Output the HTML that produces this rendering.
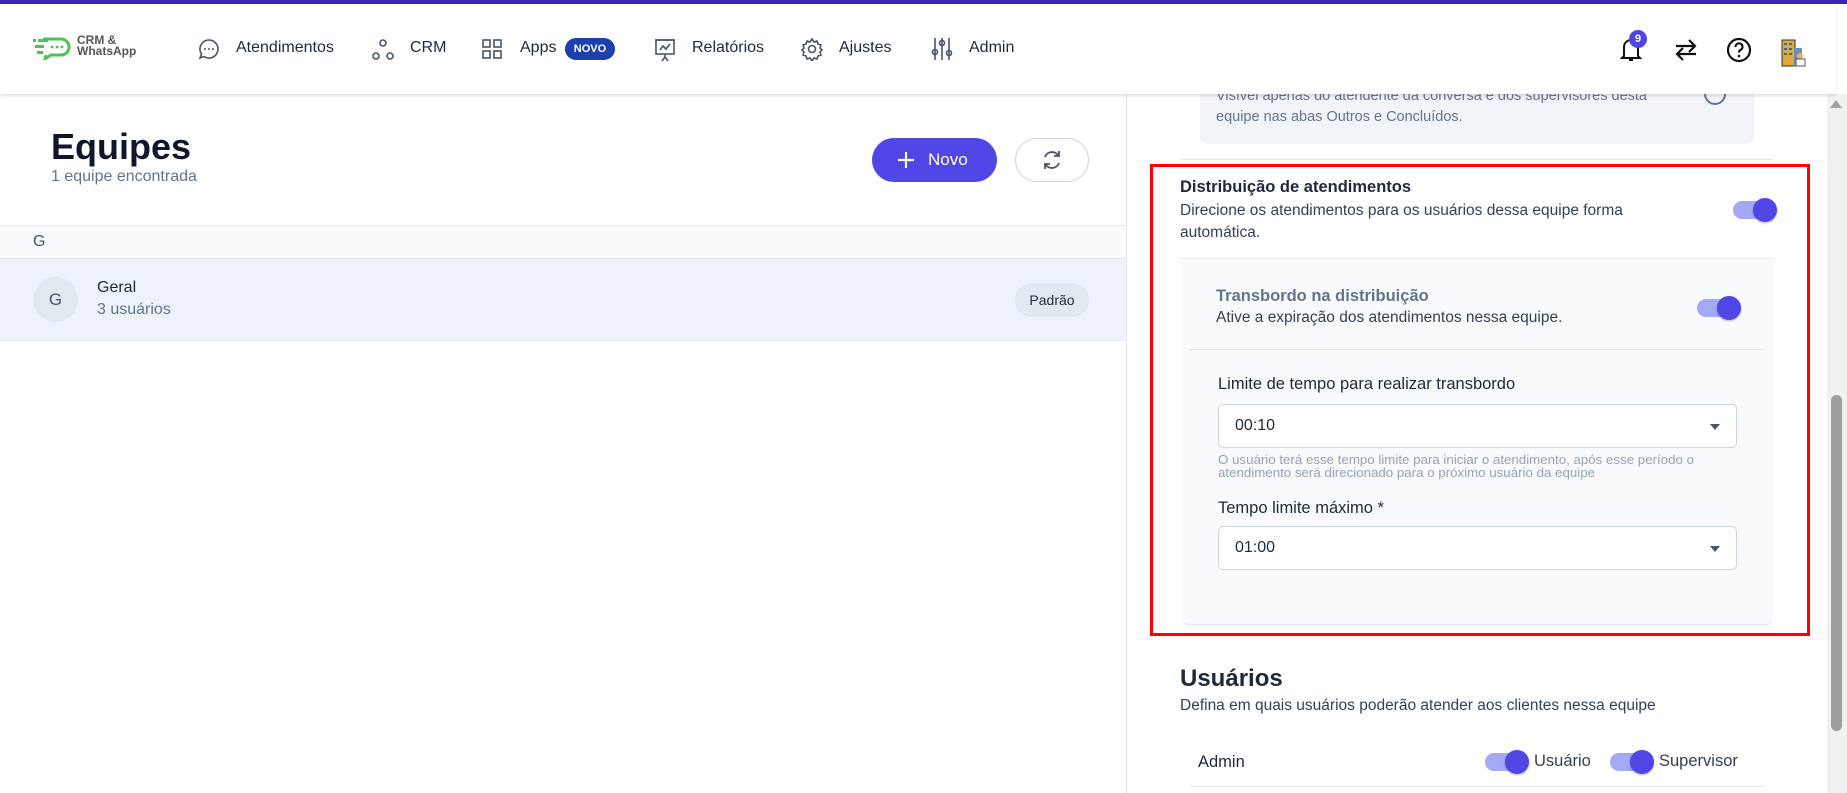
<!DOCTYPE html>
<html><head><meta charset="utf-8"><style>
*{box-sizing:border-box;margin:0;padding:0}
body{width:1847px;height:793px;overflow:hidden;background:#fff;font-family:"Liberation Sans",sans-serif;color:#1e293b;position:relative}
.a{position:absolute;white-space:nowrap}
.topline{left:0;top:0;width:1847px;height:4px;background:#3b24b8;z-index:5}
.header{left:0;top:4px;width:1836px;height:90px;background:#fff;box-shadow:0 2px 3px rgba(0,0,0,.12);z-index:4}
.nav{font-size:16px;color:#1e293b}
.ic{stroke:#475569;fill:none;stroke-width:1.6}
.tog{position:absolute;width:42px;height:18px;border-radius:9px;background:#a5a8f5}
.tog::after{content:"";position:absolute;right:-2px;top:-3px;width:24px;height:24px;border-radius:50%;background:#4f46e5;box-shadow:0 1px 2px rgba(0,0,0,.3)}
.sel{position:absolute;left:1218px;width:519px;height:44px;border:1px solid #cbd5e1;border-radius:5px;background:#fff;font-size:16px;color:#1e293b;padding:12px 0 0 16px}
.sel::after{content:"";position:absolute;right:16px;top:19px;border-left:5px solid transparent;border-right:5px solid transparent;border-top:6px solid #475569}
</style></head><body>
<div class="a topline"></div>
<div class="a header">
  <svg class="a" style="left:33px;top:32px" width="40" height="24" viewBox="0 0 40 24"><g fill="#4cc352"><rect x="0" y="3" width="3" height="3"/><rect x="5" y="3" width="10" height="3"/><rect x="2" y="9" width="9" height="3"/><rect x="4" y="15" width="6" height="3"/></g><path d="M10 3h18a8 8 0 0 1 0 16H18l-6 4 1-4" fill="none" stroke="#4cc352" stroke-width="3"/><circle cx="19" cy="11" r="1.4" fill="#4cc352"/><circle cx="24" cy="11" r="1.4" fill="#4cc352"/><circle cx="29" cy="11" r="1.4" fill="#4cc352"/></svg>
  <div class="a" style="left:77px;top:31px;font-size:12px;line-height:11px;font-weight:bold;color:#555">CRM &amp;<br>WhatsApp</div>
  <svg class="a" style="left:197px;top:33px" width="24" height="24" viewBox="0 0 24 24"><path class="ic" d="M12 3a9 9 0 1 1-5 16.5L3 21l1.5-4A9 9 0 0 1 12 3z"/><circle cx="8" cy="12" r="1" fill="#475569"/><circle cx="12" cy="12" r="1" fill="#475569"/><circle cx="16" cy="12" r="1" fill="#475569"/></svg>
  <div class="a nav" style="left:236px;top:35px">Atendimentos</div>
  <svg class="a" style="left:370px;top:33px" width="26" height="26" viewBox="0 0 26 26"><circle class="ic" cx="13" cy="6" r="3"/><circle class="ic" cx="6" cy="19" r="3"/><circle class="ic" cx="20" cy="19" r="3"/></svg>
  <div class="a nav" style="left:410px;top:35px">CRM</div>
  <svg class="a" style="left:481px;top:34px" width="22" height="22" viewBox="0 0 22 22"><rect class="ic" x="2" y="2" width="7" height="7"/><rect class="ic" x="13" y="2" width="7" height="7"/><rect class="ic" x="2" y="13" width="7" height="7"/><rect class="ic" x="13" y="13" width="7" height="7"/></svg>
  <div class="a nav" style="left:520px;top:35px">Apps</div>
  <div class="a" style="left:565px;top:34px;width:50px;height:22px;border-radius:11px;background:#1e40af;color:#fff;font-size:11px;font-weight:bold;text-align:center;line-height:22px">NOVO</div>
  <svg class="a" style="left:653px;top:33px" width="24" height="26" viewBox="0 0 24 26"><rect class="ic" x="3" y="3" width="18" height="14"/><path class="ic" d="M2 3h20M7 13l3-4 3 3 4-5M12 17v3M9 24l3-4 3 4"/></svg>
  <div class="a nav" style="left:692px;top:35px">Relatórios</div>
  <svg class="a" style="left:800px;top:33px" width="24" height="24" viewBox="0 0 24 24"><circle class="ic" cx="12" cy="12" r="3.5"/><path class="ic" d="M12 2l2 3 3-1 1 3 3 1-1 3 2 2-2 2 1 3-3 1-1 3-3-1-2 3-2-3-3 1-1-3-3-1 1-3-2-2 2-2-1-3 3-1 1-3 3 1z"/></svg>
  <div class="a nav" style="left:839px;top:35px">Ajustes</div>
  <svg class="a" style="left:930px;top:32px" width="24" height="26" viewBox="0 0 24 26"><path class="ic" d="M5 2v22M12 2v22M19 2v22"/><circle cx="5" cy="16" r="2.5" fill="#fff" class="ic"/><circle cx="12" cy="7" r="2.5" fill="#fff" class="ic"/><circle cx="19" cy="17" r="2.5" fill="#fff" class="ic"/></svg>
  <div class="a nav" style="left:969px;top:35px">Admin</div>
  <svg class="a" style="left:1619px;top:30px" width="26" height="30" viewBox="0 0 26 30"><path d="M5 22V13a7 7 0 0 1 14 0v9l2 2H3z M10 26h4" fill="none" stroke="#111" stroke-width="2"/></svg>
  <div class="a" style="left:1629px;top:26px;width:18px;height:18px;border-radius:50%;background:#4f46e5;color:#fff;font-size:11px;font-weight:bold;text-align:center;line-height:18px">9</div>
  <svg class="a" style="left:1672px;top:32px" width="28" height="28" viewBox="0 0 28 28"><path d="M4 10h18M17 4l6 6-6 6M24 18H6M11 12l-6 6 6 6" fill="none" stroke="#111" stroke-width="2.2"/></svg>
  <svg class="a" style="left:1725px;top:32px" width="28" height="28" viewBox="0 0 28 28"><circle cx="14" cy="14" r="11" fill="none" stroke="#111" stroke-width="2.2"/><path d="M10.5 11a3.5 3.5 0 1 1 5 3c-1.2.6-1.5 1.3-1.5 2.5" fill="none" stroke="#111" stroke-width="2.2"/><circle cx="14" cy="20" r="1.3" fill="#111"/></svg>
  <svg class="a" style="left:1780px;top:34px" width="26" height="30" viewBox="0 0 26 30"><rect x="2" y="2" width="13" height="26" fill="#e0a83a" stroke="#333" stroke-width="1"/><g fill="#2b6cb0"><rect x="4" y="5" width="3" height="2"/><rect x="9" y="5" width="3" height="2"/><rect x="4" y="10" width="3" height="2"/><rect x="9" y="10" width="3" height="2"/><rect x="4" y="15" width="3" height="2"/><rect x="9" y="15" width="3" height="2"/></g><rect x="14" y="10" width="8" height="18" fill="#6b8fb5"/><circle cx="20" cy="18" r="3" fill="#e8b070"/><rect x="16" y="21" width="9" height="7" fill="#fff" stroke="#555"/></svg>
</div>

<!-- left panel -->
<div class="a" style="left:51px;top:126px;font-size:36px;font-weight:bold;color:#0f172a">Equipes</div>
<div class="a" style="left:51px;top:168px;font-size:16px;color:#64748b">1 equipe encontrada</div>
<div class="a" style="left:872px;top:138px;width:125px;height:44px;border-radius:22px;background:#4f46e5;color:#fff;font-size:17px;line-height:44px;padding-left:56px">Novo</div>
<svg class="a" style="left:896px;top:150px" width="20" height="20" viewBox="0 0 20 20"><path d="M10 2v16M2 10h16" stroke="#fff" stroke-width="2.2"/></svg>
<div class="a" style="left:1015px;top:138px;width:74px;height:44px;border-radius:22px;border:1px solid #cbd5e1;background:#fff"></div>
<svg class="a" style="left:1040px;top:148px" width="24" height="24" viewBox="0 0 24 24"><path d="M5 9a7.5 7.5 0 0 1 13-2l1 1M19 15a7.5 7.5 0 0 1-13 2l-1-1M19 3v5h-5M5 21v-5h5" fill="none" stroke="#475569" stroke-width="1.8"/></svg>
<div class="a" style="left:0;top:225px;width:1126px;height:34px;background:#f8fafc;border-top:1px solid #e2e8f0;border-bottom:1px solid #e2e8f0"></div>
<div class="a" style="left:33px;top:233px;font-size:16px;color:#475569">G</div>
<div class="a" style="left:0;top:259px;width:1126px;height:82px;background:#eef2fd;border-bottom:1px solid #e2e8f0"></div>
<div class="a" style="left:33px;top:277px;width:45px;height:45px;border-radius:50%;background:#e2e8f0;color:#475569;font-size:17px;text-align:center;line-height:45px">G</div>
<div class="a" style="left:97px;top:279px;font-size:16px;color:#1e293b">Geral</div>
<div class="a" style="left:97px;top:301px;font-size:16px;color:#64748b">3 usuários</div>
<div class="a" style="left:1015px;top:283px;width:74px;height:34px;border-radius:17px;background:#e2e8f0;font-size:14px;text-align:center;line-height:34px;color:#1e293b">Padrão</div>
<div class="a" style="left:1126px;top:94px;width:1px;height:699px;background:#e5e7eb"></div>

<!-- right panel -->
<div class="a" style="left:1200px;top:70px;width:554px;height:74px;background:#f1f4f9;border-radius:8px"></div>
<div class="a" style="left:1216px;top:86px;font-size:14.5px;color:#64748b;line-height:21px">Visível apenas do atendente da conversa e dos supervisores desta<br>equipe nas abas Outros e Concluídos.</div>
<div class="a" style="left:1704px;top:83px;width:22px;height:22px;border-radius:50%;border:2px solid #64748b"></div>
<div class="a" style="left:1180px;top:159px;width:593px;height:1px;background:#e2e8f0"></div>

<div class="a" style="left:1150px;top:164px;width:660px;height:472px;border:3px solid #f00"></div>
<div class="a" style="left:1180px;top:178px;font-size:16.5px;font-weight:bold;color:#1e293b">Distribuição de atendimentos</div>
<div class="a" style="left:1180px;top:200px;font-size:15.5px;color:#334155;line-height:22px">Direcione os atendimentos para os usuários dessa equipe forma<br>automática.</div>
<div class="tog" style="left:1733px;top:201px"></div>
<div class="a" style="left:1180px;top:258px;width:593px;height:1px;background:#e2e8f0"></div>
<div class="a" style="left:1182px;top:259px;width:591px;height:366px;background:#f8fafc;border-radius:0 0 6px 6px;border-bottom:1px solid #e2e8f0"></div>
<div class="a" style="left:1216px;top:287px;font-size:16.5px;font-weight:bold;color:#64748b">Transbordo na distribuição</div>
<div class="a" style="left:1216px;top:309px;font-size:15.5px;color:#334155">Ative a expiração dos atendimentos nessa equipe.</div>
<div class="tog" style="left:1697px;top:299px"></div>
<div class="a" style="left:1190px;top:349px;width:574px;height:1px;background:#e2e8f0"></div>
<div class="a" style="left:1218px;top:375px;font-size:16.5px;color:#1e293b">Limite de tempo para realizar transbordo</div>
<div class="sel" style="top:404px">00:10</div>
<div class="a" style="left:1218px;top:453px;font-size:13.3px;color:#94a3b8;line-height:13px">O usuário terá esse tempo limite para iniciar o atendimento, após esse período o<br>atendimento será direcionado para o próximo usuário da equipe</div>
<div class="a" style="left:1218px;top:499px;font-size:16.5px;color:#1e293b">Tempo limite máximo *</div>
<div class="sel" style="top:526px">01:00</div>

<div class="a" style="left:1180px;top:665px;font-size:24px;font-weight:bold;color:#1e293b">Usuários</div>
<div class="a" style="left:1180px;top:697px;font-size:15.5px;color:#334155">Defina em quais usuários poderão atender aos clientes nessa equipe</div>
<div class="a" style="left:1198px;top:753px;font-size:16.5px;color:#1e293b">Admin</div>
<div class="tog" style="left:1485px;top:753px"></div>
<div class="a" style="left:1534px;top:752px;font-size:16.5px;color:#334155">Usuário</div>
<div class="tog" style="left:1610px;top:753px"></div>
<div class="a" style="left:1659px;top:752px;font-size:16.5px;color:#334155">Supervisor</div>
<div class="a" style="left:1190px;top:786px;width:574px;height:1px;background:#e2e8f0"></div>

<!-- scrollbar -->
<div class="a" style="left:1827px;top:94px;width:20px;height:699px;background:#f1f1f1"></div>
<div class="a" style="left:1830px;top:100px;border-left:6px solid transparent;border-right:6px solid transparent;border-bottom:8px solid #a3a3a3"></div>
<div class="a" style="left:1831px;top:395px;width:11px;height:336px;border-radius:6px;background:#9e9e9e"></div>
</body></html>
